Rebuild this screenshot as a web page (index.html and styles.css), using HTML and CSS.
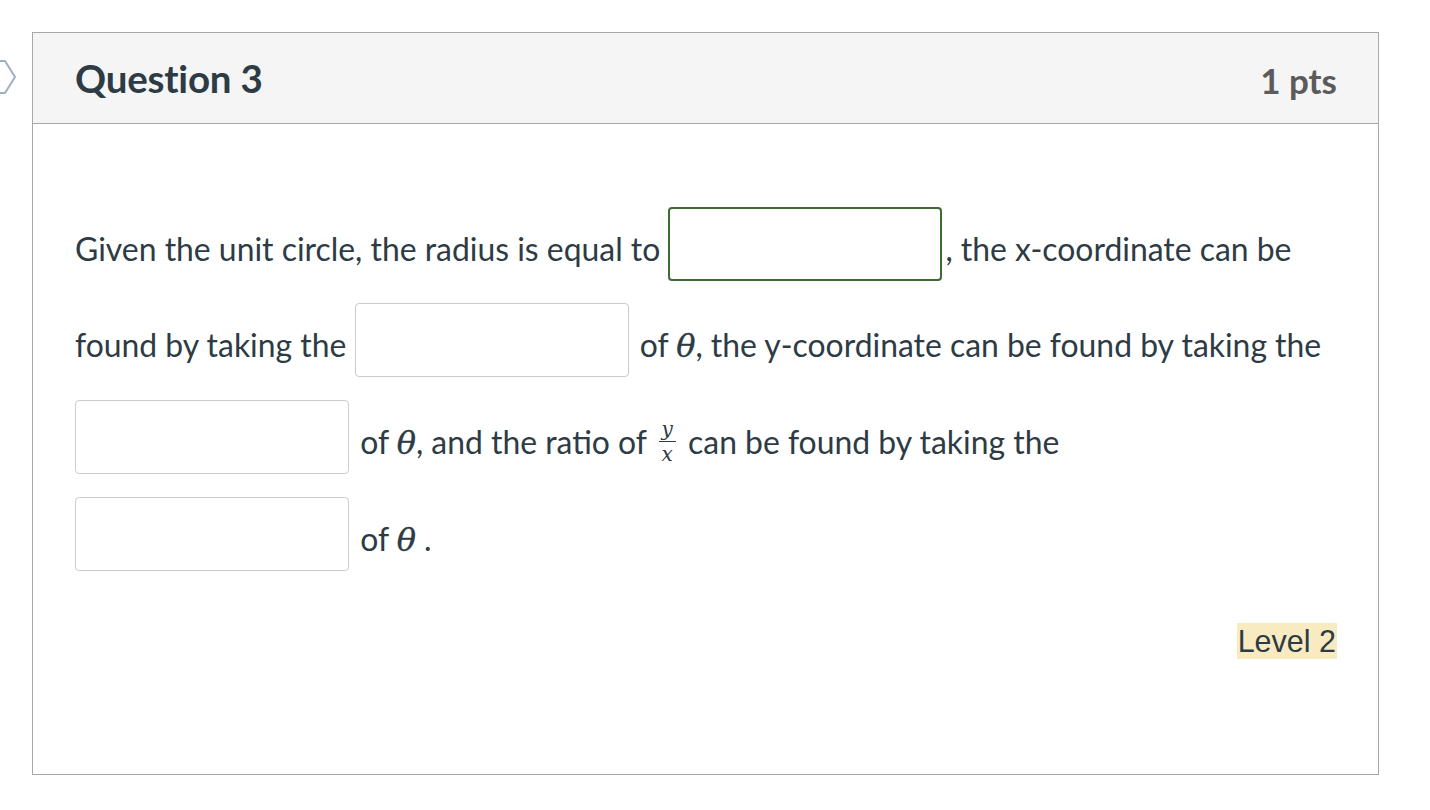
FILE: index.html
```html
<!DOCTYPE html>
<html>
<head>
<meta charset="utf-8">
<link rel="stylesheet" href="styles.css">
</head>
<body>
<div class="page">
  <svg class="nav-arrow" width="20" height="40" viewBox="0 0 20 40"><path d="M-6 3 L5 3 L15 19 L5 35 L-6 35" fill="none" stroke="#9fb0c2" stroke-width="2" stroke-linejoin="round"/></svg>
  <div class="card">
    <div class="card-header">
      <h2 class="title">Question 3</h2>
      <span class="pts">1 pts</span>
    </div>
    <div class="card-body">
      <p class="question">Given the unit circle, the radius is equal to <input class="blank blank-active" type="text">, the x-coordinate can be found by taking the <input class="blank" type="text"> of <span class="math">θ</span>, the y-coordinate can be found by taking the <input class="blank" type="text"> of <span class="math">θ</span>, and the ratio of <span class="frac"><span class="num">y</span><span class="den">x</span></span> can be found by taking the <input class="blank" type="text"> of <span class="math">θ</span>&nbsp;.</p>
      <div class="level-row"><span class="level">Level 2</span></div>
    </div>
  </div>
</div>
</body>
</html>
```

FILE: styles.css
```css
html, body {
  margin: 0;
  padding: 0;
  background: #fff;
}
.page {
  position: relative;
  padding: 32px 0 0 32px;
  font-family: Lato, "Liberation Sans", sans-serif;
  color: #2d3b45;
}
.nav-arrow {
  position: absolute;
  left: 0;
  top: 58px;
}
.card {
  width: 1345px;
  height: 741px;
  border: 1px solid #a8a8a8;
  box-sizing: content-box;
}
.card-header {
  height: 90px;
  background: #f5f5f5;
  border-bottom: 1px solid #a8a8a8;
  display: flex;
  align-items: center;
  justify-content: space-between;
  padding: 0 41px 0 42px;
}
.title {
  margin: 0;
  font-size: 38.5px;
  font-weight: 700;
  color: #2d3b45;
  letter-spacing: -0.2px;
}
.pts {
  font-size: 35px;
  font-weight: 700;
  color: #5b5b5b;
  margin-top: 3px;
}
.card-body {
  padding: 77px 41px 0 42px;
}
.question {
  margin: 0;
  font-size: 31.9px;
  line-height: 96px;
}
.blank {
  display: inline-block;
  width: 274px;
  height: 74px;
  box-sizing: border-box;
  border: 1px solid #c7cdd1;
  border-radius: 4px;
  background: #fff;
  vertical-align: middle;
  margin: -18px 3px 0 0;
  padding: 0;
}
.blank-active {
  border: 2px solid #3c6b33;
}
.math {
  font-family: "DejaVu Serif", "Liberation Serif", serif;
  font-style: italic;
  font-size: 32px;
  -webkit-text-stroke: 0.4px #2d3b45;
}
.frac {
  display: inline-flex;
  flex-direction: column;
  align-items: center;
  vertical-align: middle;
  font-family: "DejaVu Serif", "Liberation Serif", serif;
  font-style: italic;
  font-size: 20px;
  line-height: 20px;
  margin: -8px 4px 0 4px;
}
.num {
  border-bottom: 1.5px solid #2d3b45;
  padding: 0 3px 2px 3px;
}
.den {
  padding-top: 2px;
}
.level-row {
  display: flex;
  justify-content: flex-end;
  margin-top: 35px;
}
.level {
  font-family: "Liberation Sans", Arial, sans-serif;
  font-size: 30.5px;
  line-height: 36px;
  background: #f9ebc1;
  color: #2d3b45;
  padding: 0 1px;
}
```
